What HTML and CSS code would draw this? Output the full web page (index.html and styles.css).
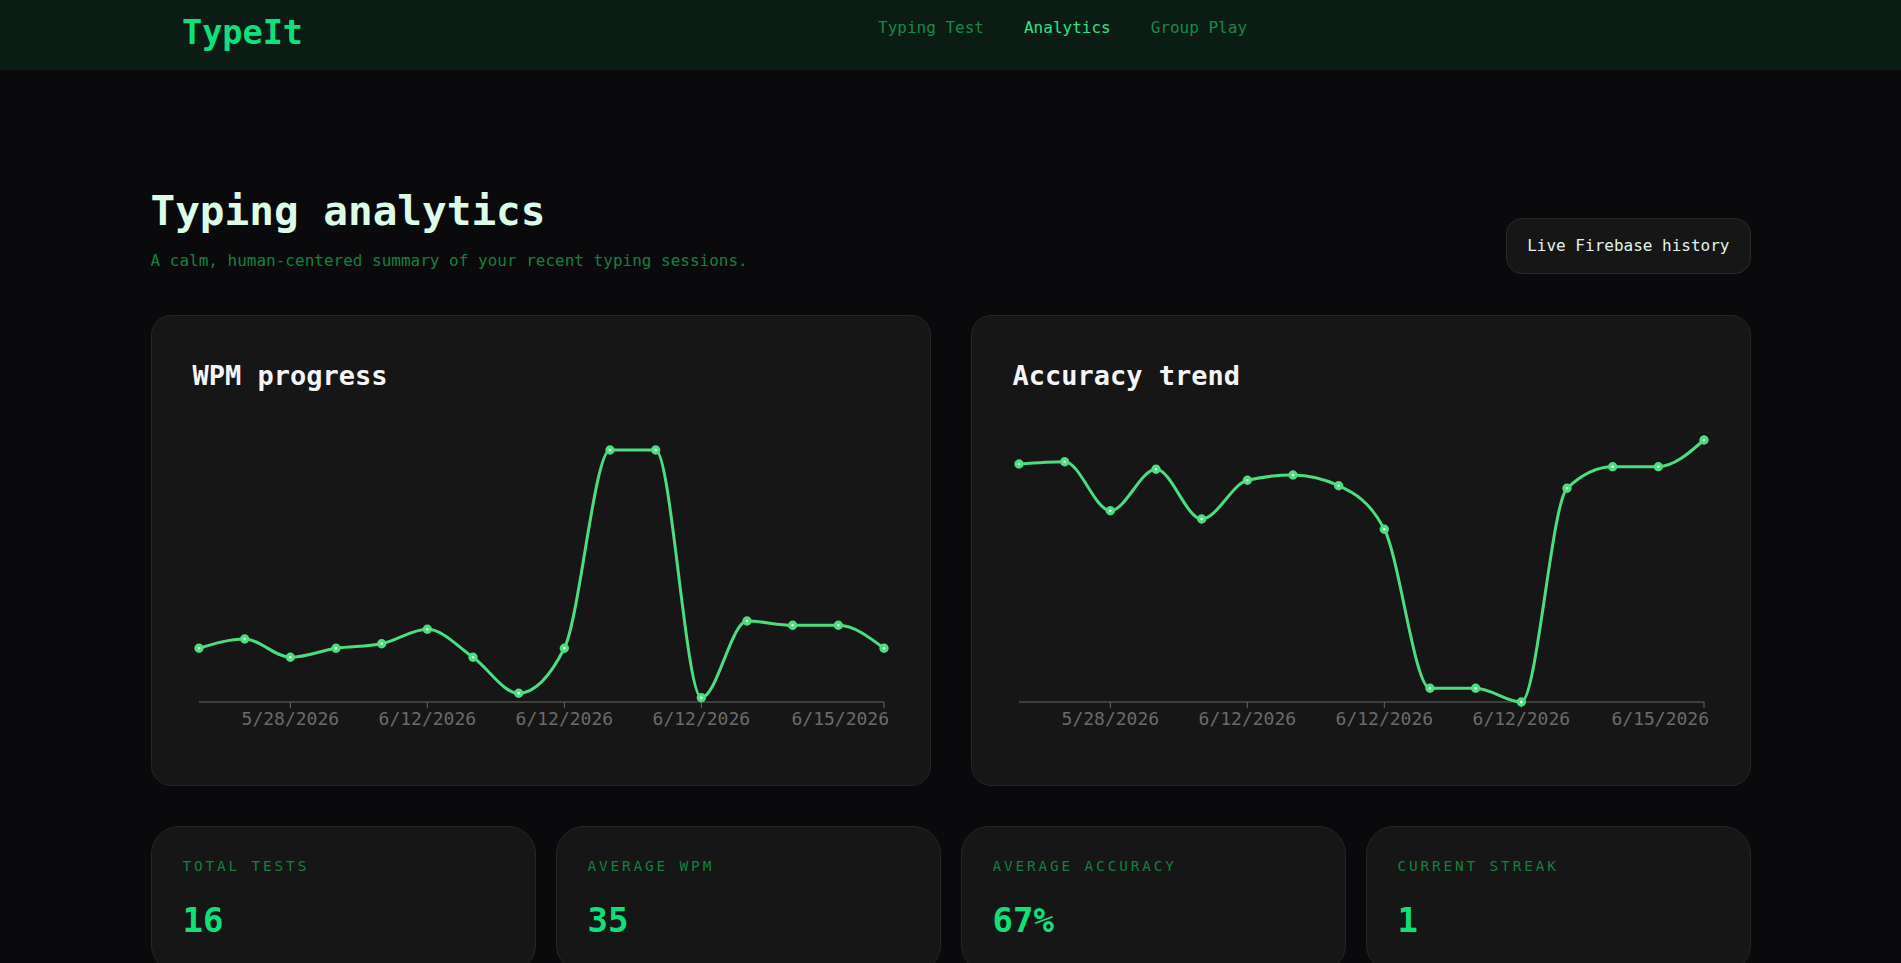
FILE: index.html
```html
<!DOCTYPE html>
<html lang="en">
<head>
<meta charset="utf-8">
<title>TypeIt — Analytics</title>
<link rel="stylesheet" href="styles.css">
</head>
<body>
<nav class="topbar">
  <div class="topbar-inner">
    <div class="logo">TypeIt</div>
    <ul class="nav-links">
      <li><a class="nav-link">Typing Test</a></li>
      <li><a class="nav-link is-active">Analytics</a></li>
      <li><a class="nav-link">Group Play</a></li>
    </ul>
  </div>
</nav>

<main class="page">
  <header class="page-header">
    <div class="page-heading">
      <h1 class="page-title">Typing analytics</h1>
      <p class="page-subtitle">A calm, human-centered summary of your recent typing sessions.</p>
    </div>
    <span class="badge">Live Firebase history</span>
  </header>

  <section class="charts">
    <article class="chart-card">
      <h2 class="chart-title">WPM progress</h2>
      <svg class="chart" id="wpm-chart" width="696" height="344" viewBox="0 0 696 344">
        <g class="axis">
          <line x1="6" y1="302" x2="691" y2="302"></line>
          <line x1="97.33" y1="302" x2="97.33" y2="308"></line>
          <line x1="234.33" y1="302" x2="234.33" y2="308"></line>
          <line x1="371.33" y1="302" x2="371.33" y2="308"></line>
          <line x1="508.33" y1="302" x2="508.33" y2="308"></line>
          <line x1="691" y1="302" x2="691" y2="308"></line>
        </g>
        <g class="ticks">
          <text x="97.33" y="325" text-anchor="middle">5/28/2026</text>
          <text x="234.33" y="325" text-anchor="middle">6/12/2026</text>
          <text x="371.33" y="325" text-anchor="middle">6/12/2026</text>
          <text x="508.33" y="325" text-anchor="middle">6/12/2026</text>
          <text x="696" y="325" text-anchor="end">6/15/2026</text>
        </g>
      </svg>
    </article>
    <article class="chart-card">
      <h2 class="chart-title">Accuracy trend</h2>
      <svg class="chart" id="accuracy-chart" width="696" height="344" viewBox="0 0 696 344">
        <g class="axis">
          <line x1="6" y1="302" x2="691" y2="302"></line>
          <line x1="97.33" y1="302" x2="97.33" y2="308"></line>
          <line x1="234.33" y1="302" x2="234.33" y2="308"></line>
          <line x1="371.33" y1="302" x2="371.33" y2="308"></line>
          <line x1="508.33" y1="302" x2="508.33" y2="308"></line>
          <line x1="691" y1="302" x2="691" y2="308"></line>
        </g>
        <g class="ticks">
          <text x="97.33" y="325" text-anchor="middle">5/28/2026</text>
          <text x="234.33" y="325" text-anchor="middle">6/12/2026</text>
          <text x="371.33" y="325" text-anchor="middle">6/12/2026</text>
          <text x="508.33" y="325" text-anchor="middle">6/12/2026</text>
          <text x="696" y="325" text-anchor="end">6/15/2026</text>
        </g>
      </svg>
    </article>
  </section>

  <section class="stats">
    <div class="stat-card">
      <p class="stat-label">Total tests</p>
      <p class="stat-value">16</p>
    </div>
    <div class="stat-card">
      <p class="stat-label">Average WPM</p>
      <p class="stat-value">35</p>
    </div>
    <div class="stat-card">
      <p class="stat-label">Average accuracy</p>
      <p class="stat-value">67%</p>
    </div>
    <div class="stat-card">
      <p class="stat-label">Current streak</p>
      <p class="stat-value">1</p>
    </div>
  </section>
</main>
<script src="script.js"></script>
</body>
</html>
```

FILE: styles.css
```css
* {
  box-sizing: border-box;
}

body {
  margin: 0;
  background: #0a0a0c;
  font-family: "DejaVu Sans Mono", monospace;
  color: #e5e5e5;
}

.topbar {
  height: 70px;
  background: #0b1c14;
}

.topbar-inner {
  display: flex;
  align-items: flex-start;
  padding: 14px 0 0 182px;
}

.logo {
  font-size: 33.5px;
  font-weight: 700;
  line-height: 38px;
  color: #10e07a;
}

.nav-links {
  display: flex;
  gap: 40px;
  list-style: none;
  margin: 2px 0 0 575px;
  padding: 0;
}

.nav-link {
  font-size: 16px;
  line-height: 24px;
  color: #168a45;
  text-decoration: none;
}

.nav-link.is-active {
  color: #2ae585;
}

.page {
  max-width: 1600px;
  margin: 0 auto;
  padding-top: 117px;
}

.page-header {
  display: flex;
  justify-content: space-between;
  align-items: flex-end;
  margin-bottom: 41px;
}

.page-title {
  margin: 0;
  font-size: 41px;
  line-height: 48px;
  font-weight: 700;
  color: #dcfce7;
}

.page-subtitle {
  margin: 13px 0 0;
  font-size: 16px;
  line-height: 25.6px;
  color: #15803d;
}

.badge {
  padding: 16px 20px;
  font-size: 16px;
  line-height: 22px;
  color: #e3f3e8;
  background: #161616;
  border: 1px solid #2a2a2a;
  border-radius: 16px;
}

.charts {
  display: grid;
  grid-template-columns: 1fr 1fr;
  gap: 40px;
  margin-bottom: 40px;
}

.chart-card {
  display: flex;
  flex-direction: column;
  padding: 44px 41px 41px;
  background: #161616;
  border: 1px solid #262626;
  border-radius: 20px;
}

.chart-title {
  margin: 0 0 8px;
  font-size: 27px;
  line-height: 32px;
  font-weight: 700;
  color: #f4f4f5;
}

.chart {
  display: block;
  overflow: hidden;
}

.axis line {
  stroke: #666666;
  stroke-width: 1;
}

.ticks text {
  font-family: "DejaVu Sans Mono", monospace;
  font-size: 18px;
  fill: #6b6b6b;
}

.chart-line {
  fill: none;
  stroke: #4ade80;
  stroke-width: 3;
}

.chart-dot {
  fill: #ffffff;
  stroke: #4ade80;
  stroke-width: 3.4;
}

.stats {
  display: grid;
  grid-template-columns: repeat(4, 1fr);
  gap: 20px;
}

.stat-card {
  padding: 31px;
  background: #161616;
  border: 1px solid #262626;
  border-radius: 28px;
}

.stat-label {
  margin: 0;
  font-size: 14.4px;
  line-height: 17px;
  letter-spacing: 2.85px;
  text-transform: uppercase;
  color: #15803d;
}

.stat-value {
  margin: 25px 0 0;
  font-size: 34px;
  line-height: 41px;
  font-weight: 700;
  color: #10e07a;
}
```

FILE: script.js
```js
(function () {
  var NS = "http://www.w3.org/2000/svg";
  var series = {
    "wpm-chart": [248.3, 239, 257.3, 248.3, 243.7, 229.3, 257.3, 293.3, 248.3, 50, 50, 297.7, 221, 225.3, 225.3, 248.3],
    "accuracy-chart": [64, 61.7, 110.7, 69.3, 119, 80.3, 75, 85.7, 129.3, 288.3, 288.3, 302, 88.3, 66.7, 66.7, 40]
  };

  function sign(x) { return x < 0 ? -1 : 1; }

  function monotonePath(xs, ys) {
    var n = xs.length, m = new Array(n), i;
    for (i = 1; i < n - 1; i++) {
      var h0 = xs[i] - xs[i - 1], h1 = xs[i + 1] - xs[i];
      var s0 = (ys[i] - ys[i - 1]) / h0, s1 = (ys[i + 1] - ys[i]) / h1;
      var p = (s0 * h1 + s1 * h0) / (h0 + h1);
      m[i] = (sign(s0) + sign(s1)) * Math.min(Math.abs(s0), Math.abs(s1), 0.5 * Math.abs(p)) || 0;
    }
    var sFirst = (ys[1] - ys[0]) / (xs[1] - xs[0]);
    var sLast = (ys[n - 1] - ys[n - 2]) / (xs[n - 1] - xs[n - 2]);
    m[0] = (3 * sFirst - m[1]) / 2;
    m[n - 1] = (3 * sLast - m[n - 2]) / 2;
    var d = "M" + xs[0] + "," + ys[0];
    for (i = 0; i < n - 1; i++) {
      var dx = (xs[i + 1] - xs[i]) / 3;
      d += "C" + (xs[i] + dx) + "," + (ys[i] + dx * m[i]) + "," +
        (xs[i + 1] - dx) + "," + (ys[i + 1] - dx * m[i + 1]) + "," +
        xs[i + 1] + "," + ys[i + 1];
    }
    return d;
  }

  Object.keys(series).forEach(function (id) {
    var svg = document.getElementById(id);
    var ys = series[id];
    var xs = ys.map(function (_, i) { return 6 + i * (685 / 15); });
    var path = document.createElementNS(NS, "path");
    path.setAttribute("class", "chart-line");
    path.setAttribute("d", monotonePath(xs, ys));
    svg.appendChild(path);
    xs.forEach(function (x, i) {
      var c = document.createElementNS(NS, "circle");
      c.setAttribute("class", "chart-dot");
      c.setAttribute("cx", x);
      c.setAttribute("cy", ys[i]);
      c.setAttribute("r", 3);
      svg.appendChild(c);
    });
  });
})();
```
